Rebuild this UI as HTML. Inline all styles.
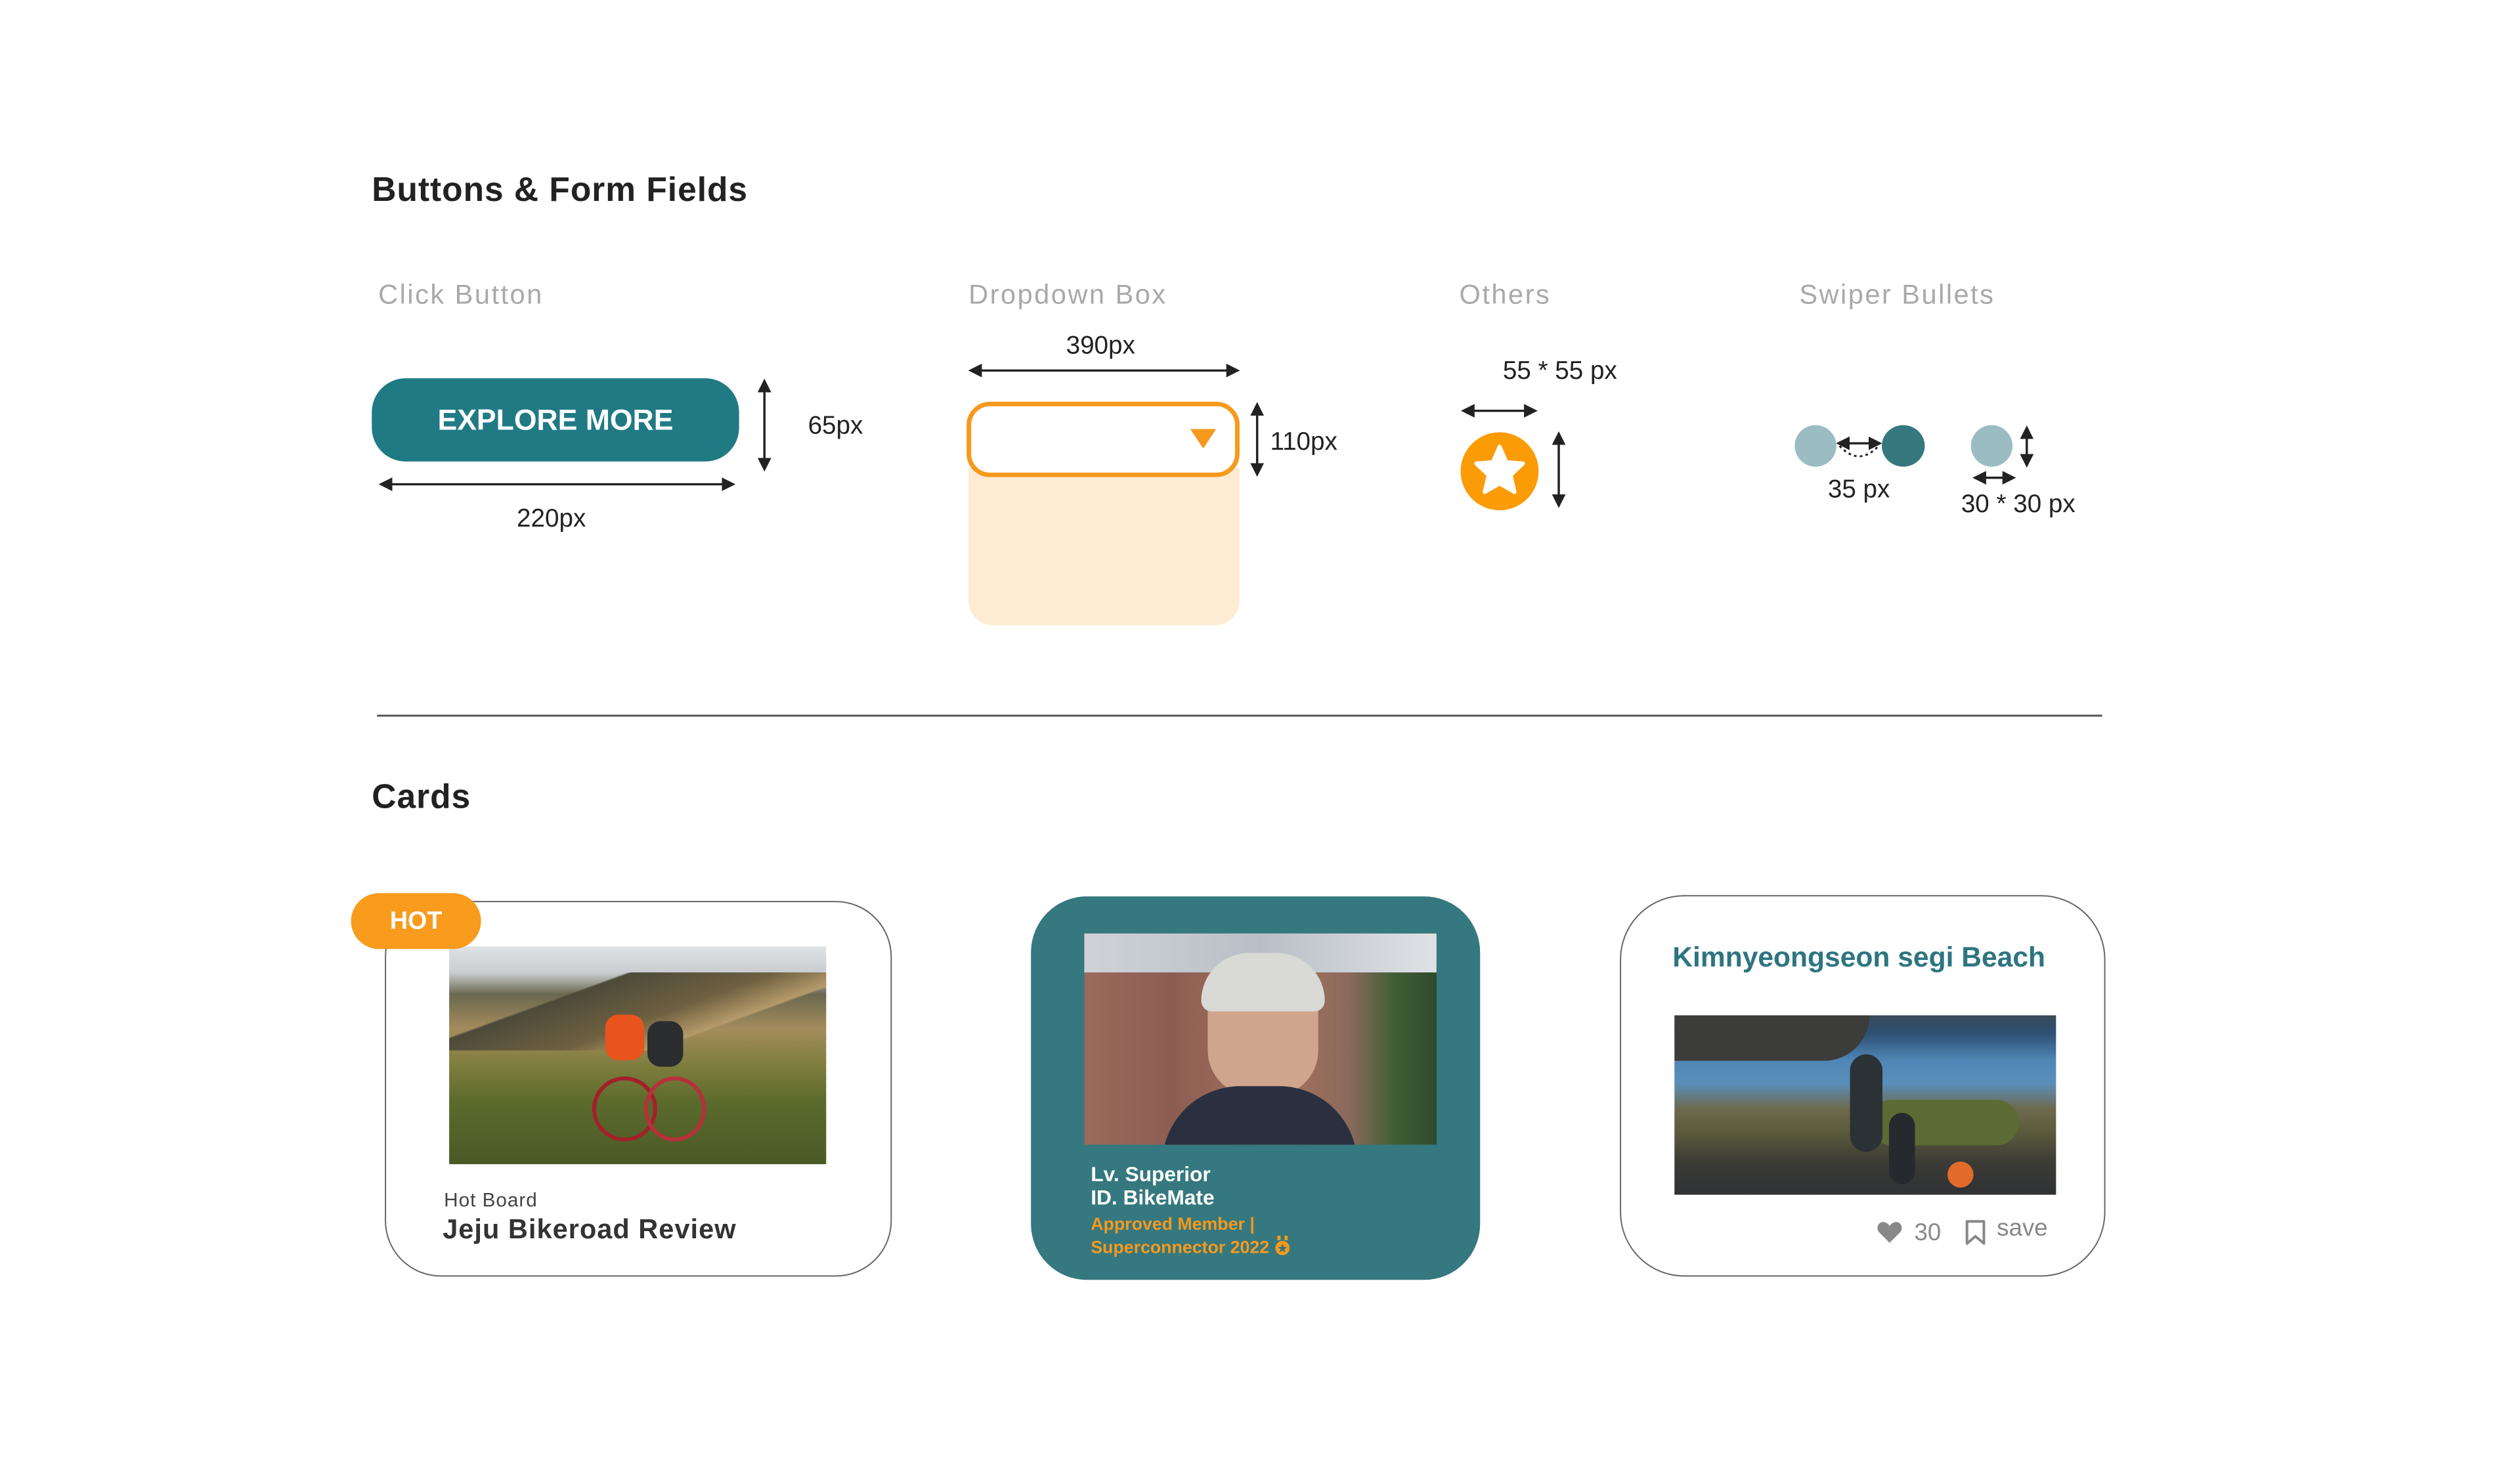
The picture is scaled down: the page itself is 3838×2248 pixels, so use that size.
<!DOCTYPE html>
<html><head><meta charset="utf-8">
<style>
*{margin:0;padding:0;box-sizing:border-box}
body{width:3838px;height:2248px;background:#fff;position:relative;overflow:hidden;font-family:"Liberation Sans",sans-serif;color:#222}
#w{position:absolute;left:0;top:0;width:3838px;height:2248px;transform:scale(0.99);transform-origin:0 0}
.a{position:absolute;white-space:nowrap}
.h{font-size:52px;font-weight:bold;color:#222;letter-spacing:1px}
.sub{font-size:42px;color:#a9a9a9;line-height:1;letter-spacing:2.5px}
.m{font-size:39px;color:#222;line-height:1}
</style></head><body><div id="w">
<div class="a h" style="left:572px;top:262px">Buttons &amp; Form Fields</div>
<div class="a sub" style="left:582px;top:432px">Click Button</div>
<div class="a sub" style="left:1490px;top:432px">Dropdown Box</div>
<div class="a sub" style="left:2245px;top:432px">Others</div>
<div class="a sub" style="left:2768px;top:432px">Swiper Bullets</div>

<div class="a" style="left:572px;top:582px;width:565px;height:128px;border-radius:52px;background:#207a84;color:#fff;font-weight:bold;font-size:45px;display:flex;align-items:center;justify-content:center">EXPLORE MORE</div>
<div class="a m" style="left:1243px;top:635px">65px</div>
<div class="a m" style="left:795px;top:778px">220px</div>
<div class="a m" style="left:1640px;top:512px">390px</div>

<div class="a" style="left:1490px;top:720px;width:417px;height:242px;background:#fdebd3;border-radius:0 0 38px 38px"></div>
<div class="a" style="left:1487px;top:618px;width:420px;height:116px;border:7px solid #f7991c;border-radius:36px;background:#fff"></div>
<svg class="a" style="left:1831px;top:660px" width="40" height="30"><polygon points="0,0 40,0 20,30" fill="#f7991c"/></svg>
<div class="a m" style="left:1954px;top:660px">110px</div>

<div class="a m" style="left:2312px;top:551px">55 * 55 px</div>
<div class="a" style="left:2247px;top:665px;width:120px;height:120px;border-radius:50%;background:#fb9b06"></div>
<svg class="a" style="left:2247px;top:665px" width="120" height="120"><polygon points="60,22 70.5,46 96,48 77,66 83,92 60,79 37,92 43,66 24,48 49.5,46" fill="#fff" stroke="#fff" stroke-width="6" stroke-linejoin="round"/></svg>

<div class="a" style="left:2761px;top:654px;width:64px;height:64px;border-radius:50%;background:#9abcc2"></div>
<div class="a" style="left:2895px;top:654px;width:66px;height:64px;border-radius:50%;background:#35797f"></div>
<div class="a" style="left:3032px;top:654px;width:64px;height:64px;border-radius:50%;background:#9abcc2"></div>
<div class="a m" style="left:2812px;top:733px">35 px</div>
<div class="a m" style="left:3017px;top:756px">30 * 30 px</div>

<svg class="a" style="left:0;top:0" width="3838" height="2248">
<defs><marker id="ar" markerWidth="6" markerHeight="6" refX="5" refY="3" orient="auto-start-reverse" markerUnits="strokeWidth"><path d="M0,0 L6,3 L0,6 Z" fill="#222"/></marker></defs>
<g stroke="#222" stroke-width="3.5" fill="none">
<line x1="1176" y1="586" x2="1176" y2="722" marker-start="url(#ar)" marker-end="url(#ar)"/>
<line x1="586" y1="745" x2="1128" y2="745" marker-start="url(#ar)" marker-end="url(#ar)"/>
<line x1="1493" y1="570" x2="1904" y2="570" marker-start="url(#ar)" marker-end="url(#ar)"/>
<line x1="1934" y1="622" x2="1934" y2="730" marker-start="url(#ar)" marker-end="url(#ar)"/>
<line x1="2251" y1="632" x2="2362" y2="632" marker-start="url(#ar)" marker-end="url(#ar)"/>
<line x1="2398" y1="667" x2="2398" y2="778" marker-start="url(#ar)" marker-end="url(#ar)"/>
<line x1="2828" y1="682" x2="2892" y2="682" marker-start="url(#ar)" marker-end="url(#ar)"/>
<line x1="3118" y1="658" x2="3118" y2="716" marker-start="url(#ar)" marker-end="url(#ar)"/>
<line x1="3038" y1="735" x2="3098" y2="735" marker-start="url(#ar)" marker-end="url(#ar)"/>
</g>
<path d="M2830,686 Q2860,718 2890,686" stroke="#222" stroke-width="3" stroke-dasharray="4 5" fill="none"/>
<line x1="580" y1="1101" x2="3234" y2="1101" stroke="#555" stroke-width="3"/>
</svg>

<div class="a h" style="left:572px;top:1196px">Cards</div>

<div class="a" style="left:592px;top:1386px;width:780px;height:578px;border:2.5px solid #666;border-radius:86px;background:#fff"></div>
<div class="a" style="left:691px;top:1456px;width:580px;height:335px;overflow:hidden;background:linear-gradient(180deg,#dfe3e6 0%,#c9cdd0 12%,#6b6850 22%,#a48c5c 38%,#7d7d3c 55%,#5b6a2c 72%,#4a5a26 100%)">
  <div style="position:absolute;left:0;top:40px;width:580px;height:120px;background:linear-gradient(160deg,transparent 30%,#4d4a3a 31%,#6e6040 55%,#b59a6a 70%,transparent 71%)"></div>
  <div style="position:absolute;left:240px;top:105px;width:60px;height:70px;background:#e8541c;border-radius:20px"></div>
  <div style="position:absolute;left:305px;top:115px;width:55px;height:70px;background:#2a2c2e;border-radius:20px"></div>
  <div style="position:absolute;left:220px;top:200px;width:100px;height:100px;border:6px solid #a3202a;border-radius:50%"></div>
  <div style="position:absolute;left:300px;top:200px;width:95px;height:100px;border:6px solid #b7303a;border-radius:50%"></div>
</div>
<div class="a" style="left:540px;top:1374px;width:200px;height:86px;border-radius:44px;background:#f99b1d;color:#fff;font-weight:bold;font-size:38px;display:flex;align-items:center;justify-content:center">HOT</div>
<div class="a" style="left:683px;top:1830px;font-size:30px;color:#444;letter-spacing:1px">Hot Board</div>
<div class="a" style="left:681px;top:1867px;font-size:42px;font-weight:bold;color:#333;letter-spacing:1px">Jeju Bikeroad Review</div>

<div class="a" style="left:1586px;top:1379px;width:691px;height:590px;border-radius:86px;background:#35787f"></div>
<div class="a" style="left:1668px;top:1436px;width:542px;height:325px;overflow:hidden;background:linear-gradient(90deg,#9a6a5c 0%,#8c5e52 25%,#a7705e 55%,#8b6a5c 75%,#3f5f36 88%,#2f4a2a 100%)">
  <div style="position:absolute;left:0;top:0;width:542px;height:60px;background:linear-gradient(90deg,#cfd3d8,#b9bfc6 50%,#dfe2e5)"></div>
  <div style="position:absolute;left:190px;top:40px;width:170px;height:210px;background:#cfa58e;border-radius:80px 80px 70px 70px"></div>
  <div style="position:absolute;left:180px;top:30px;width:190px;height:90px;background:#d9d9d6;border-radius:90px 90px 20px 20px"></div>
  <div style="position:absolute;left:120px;top:235px;width:300px;height:120px;background:#2a3040;border-radius:120px 120px 0 0"></div>
</div>
<div class="a" style="left:1678px;top:1788px;font-size:32px;font-weight:bold;color:#fff;line-height:36px">Lv. Superior<br>ID. BikeMate</div>
<div class="a" style="left:1678px;top:1866px;font-size:27px;font-weight:bold;color:#f7991c;line-height:35px">Approved Member |<br>Superconnector 2022 <svg width="26" height="30" viewBox="0 0 26 30" style="vertical-align:-3px"><rect x="5" y="0" width="5" height="7" fill="#f7991c"/><rect x="16" y="0" width="5" height="7" fill="#f7991c"/><circle cx="13" cy="19" r="11" fill="#f7991c"/><polygon points="13,12 15,17 20,17.5 16,21 17.5,26 13,23 8.5,26 10,21 6,17.5 11,17" fill="#35787f"/></svg></div>

<div class="a" style="left:2492px;top:1377px;width:747px;height:587px;border:2.5px solid #666;border-radius:99px;background:#fff"></div>
<div class="a" style="left:2573px;top:1449px;font-size:43px;font-weight:bold;color:#2d7580">Kimnyeongseon segi Beach</div>
<div class="a" style="left:2576px;top:1562px;width:587px;height:276px;overflow:hidden;background:linear-gradient(180deg,#3a4a58 0%,#2e4f74 10%,#4f86b5 25%,#5a8fba 38%,#6d6a4e 52%,#5b5a3c 65%,#3b3b36 82%,#2f3134 100%)">
  <div style="position:absolute;left:0;top:0;width:300px;height:70px;background:#3c3c3a;border-radius:0 0 150px 0"></div>
  <div style="position:absolute;left:300px;top:130px;width:230px;height:70px;background:#5c6b34;border-radius:40px"></div>
  <div style="position:absolute;left:270px;top:60px;width:50px;height:150px;background:#2b3236;border-radius:25px"></div>
  <div style="position:absolute;left:330px;top:150px;width:40px;height:110px;background:#262a2e;border-radius:20px"></div>
  <div style="position:absolute;left:420px;top:225px;width:40px;height:40px;background:#e26a2a;border-radius:50%"></div>
</div>
<svg class="a" style="left:2887px;top:1878px" width="40" height="36" viewBox="0 0 40 36"><path d="M20,34 L4,18 C-2,11 3,1 11,2 C15,2.5 18,5 20,8 C22,5 25,2.5 29,2 C37,1 42,11 36,18 Z" fill="#888"/></svg>
<div class="a" style="left:2945px;top:1875px;font-size:37px;color:#888">30</div>
<svg class="a" style="left:3022px;top:1876px" width="34" height="40" viewBox="0 0 34 40"><path d="M4,3 H30 V37 L17,26 L4,37 Z" fill="none" stroke="#888" stroke-width="4" stroke-linejoin="round"/></svg>
<div class="a" style="left:3072px;top:1868px;font-size:37px;color:#888">save</div>
</div></body></html>
